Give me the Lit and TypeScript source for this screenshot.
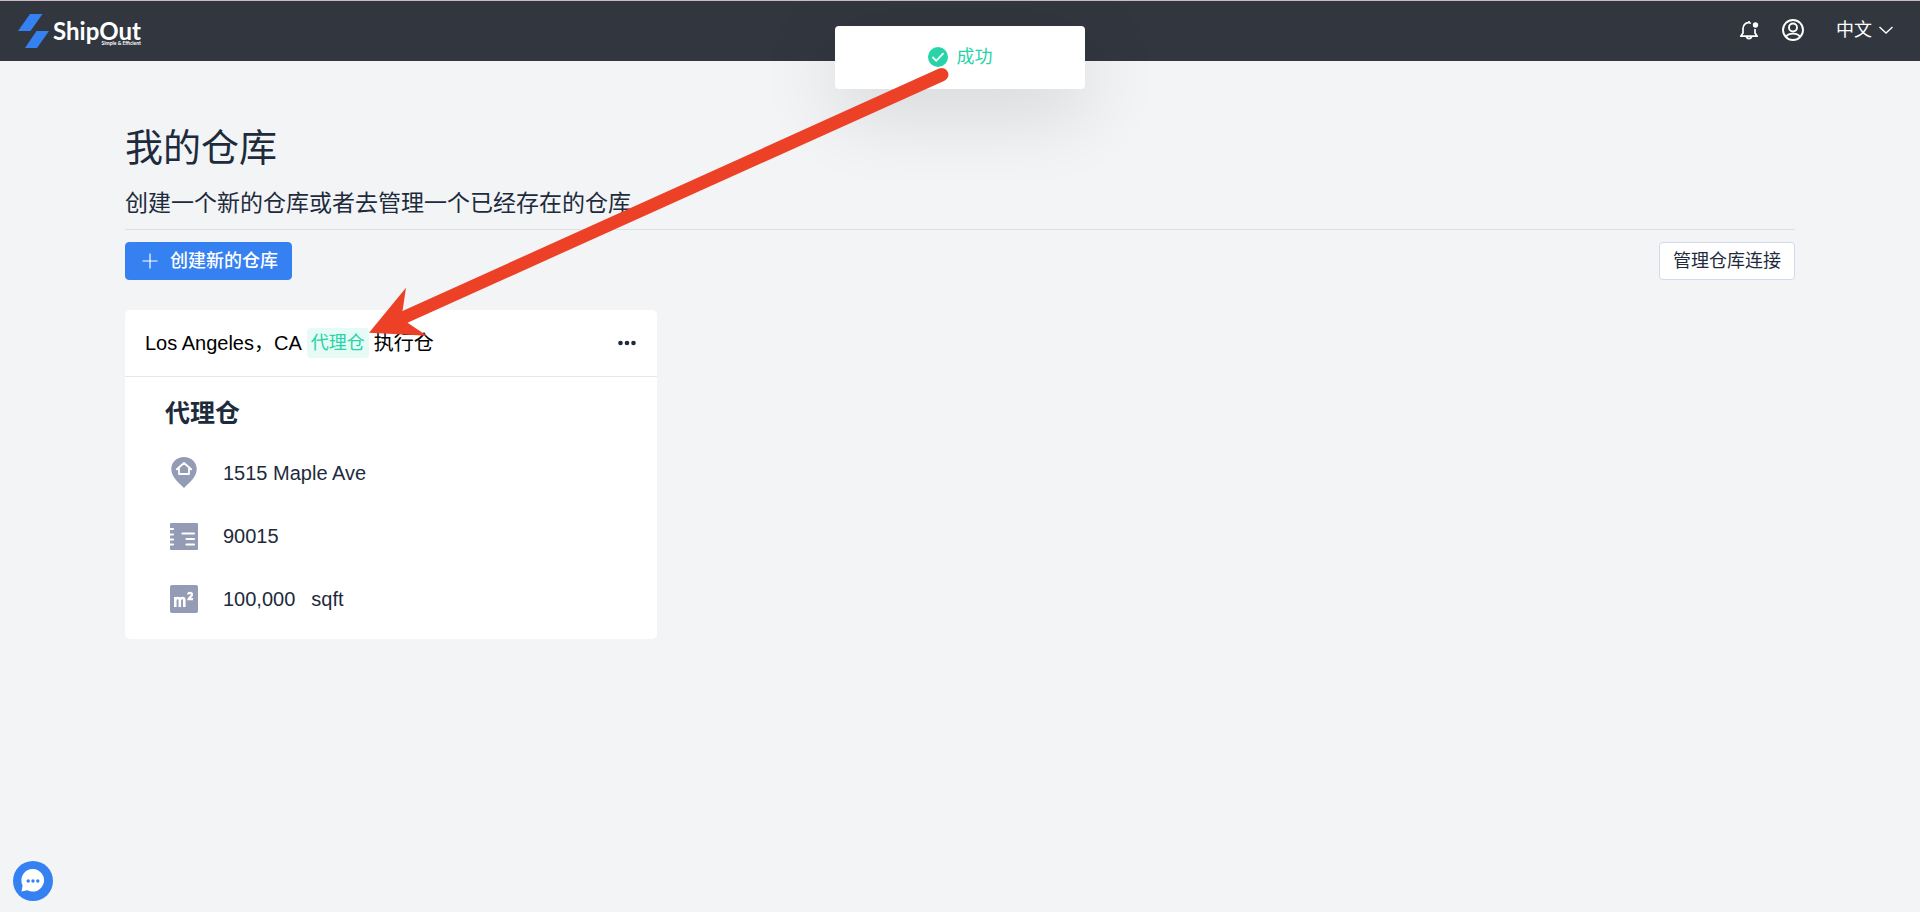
import { LitElement, html, css, svg } from "lit";
import { customElement, state } from "lit/decorators.js";

const pinIcon = svg`
  <path d="M16 0C8.800 0 3.300 5.200 3.300 12C3.300 20 11 26 16 31C21 26 28.700 20 28.700 12C28.700 5.200 23.200 0 16 0Z" fill="#949cb5"/>
  <path d="M8.800 12.300L16 6L23.200 12.300M11 11.500V17H21V11.500" fill="none" stroke="#fff" stroke-width="1.800" stroke-linejoin="round" stroke-linecap="round"/>`;
const zipIcon = svg`
  <rect x="2" y="3" width="28" height="27" rx="1" fill="#949cb5"/>
  <path d="M2 9H5M2 14.500H5M2 19.500H5M2 24.500H5M14.500 13.500H26M18.500 19H26M18.500 24.500H26" stroke="#fff" stroke-width="2.200" stroke-linecap="round"/>`;
const areaIcon = svg`
  <rect x="2" y="2" width="28" height="28" rx="2" fill="#949cb5"/>
  <path d="M7.300 24V14M7.300 17C7.800 14.300 11.800 14.300 11.800 17V24M11.800 17C12.300 14.300 16.300 14.300 16.300 17V24" fill="none" stroke="#fff" stroke-width="2.600"/>
  <path d="M20 11.500C20.500 9.300 24 9.300 24 11.700C24 13.500 21 14.500 20.500 16.200H25" fill="none" stroke="#fff" stroke-width="2.200"/>`;

@customElement("app-root")
export class AppRoot extends LitElement {
  static styles = css`
    :host {
      display: block;
      box-sizing: border-box;
      position: relative;
      min-height: 100vh;
      overflow: hidden;
      background: #f2f4f6;
      color: #1d2b3c;
      font: 18px/24px "Liberation Sans", "Noto Sans CJK SC", sans-serif;
    }
    * { box-sizing: border-box; }
    svg { display: block; flex: none; }
    button { font: inherit; color: inherit; cursor: pointer; margin: 0; }
    h1, h2, p, ul { margin: 0; padding: 0; }

    .topbar {
      display: flex;
      align-items: center;
      justify-content: space-between;
      height: 61px;
      padding: 0 26px 0 18px;
      border-top: 1px solid #cdb9bf;
      background: #32373f;
      color: #fff;
    }
    .brand {
      display: flex;
      align-items: center;
      gap: 4px;
      color: #fff;
      text-decoration: none;
    }
    .words { display: flex; flex-direction: column; padding-top: 2px; }
    .name { font: 700 24px/24px Lato, sans-serif; }
    .tag { font: 700 5px/6px Lato, sans-serif; text-align: right; margin-top: -3px; }
    .tools { display: flex; align-items: center; padding-bottom: 2px; }
    .tool {
      display: flex;
      align-items: center;
      padding: 0;
      border: 0;
      background: none;
    }
    .tool + .tool { margin-left: 21px; }
    .tool.lang { gap: 6px; margin-left: 31px; }

    .page { padding: 59px 125px; }
    h1 { font-size: 38px; line-height: 56px; font-weight: 400; }
    .lead {
      margin-top: 10px;
      padding-bottom: 9px;
      border-bottom: 1px solid #dcdfe4;
      font-size: 23px;
      line-height: 34px;
    }
    .actions { display: flex; justify-content: space-between; margin-top: 12px; }
    .btn {
      display: flex;
      align-items: center;
      height: 38px;
      padding: 0 13px;
      border: 1px solid #d3d9ea;
      border-radius: 4px;
      background: #fff;
    }
    .btn.primary {
      gap: 11px;
      border-color: #3681f2;
      background: #3681f2;
      color: #fff;
      font-weight: 500;
    }
    .grid {
      display: grid;
      grid-template-columns: repeat(3, 1fr);
      gap: 37px;
      margin-top: 30px;
    }
    .card { border-radius: 5px; background: #fff; }
    .cardhead {
      display: flex;
      align-items: center;
      justify-content: space-between;
      height: 67px;
      padding: 0 20px;
      border-bottom: 1px solid #e6e8f0;
      color: #000;
      font-size: 20px;
    }
    .place { display: flex; align-items: center; gap: 5px; }
    .badge {
      padding: 0 4px;
      border-radius: 4px;
      background: #e6faf6;
      color: #27d3a7;
      font-size: 18px;
      line-height: 30px;
    }
    .cardbody { padding: 18px 40px 9px; }
    h2 { font-size: 25px; line-height: 36px; font-weight: 700; }
    .facts { list-style: none; margin-top: 10px; }
    .fact {
      display: flex;
      align-items: center;
      gap: 23px;
      height: 63px;
      padding-left: 3px;
      font-size: 20px;
    }
    .unit { margin-left: 16px; }

    .toast {
      position: absolute;
      top: 26px;
      left: 50%;
      transform: translateX(-50%);
      display: flex;
      align-items: center;
      justify-content: center;
      gap: 9px;
      width: 250px;
      height: 63px;
      padding-bottom: 2px;
      border-radius: 4px;
      background: #fff;
      color: #27d3a7;
      box-shadow: 0 20px 80px rgba(0, 0, 0, 0.14);
    }
    .arrow { position: absolute; top: 0; left: 0; pointer-events: none; }
    .chat {
      position: fixed;
      left: 13px;
      bottom: 11px;
      padding: 0;
      border: 0;
      border-radius: 50%;
      background: none;
    }
  `;

  @state() private facts = [
    { icon: pinIcon, value: "1515 Maple Ave", unit: "" },
    { icon: zipIcon, value: "90015", unit: "" },
    { icon: areaIcon, value: "100,000", unit: "sqft" },
  ];

  render() {
    return html`
      <header class="topbar">
        <a class="brand" href="#">
          <svg width="31" height="36" viewBox="0 0 31 36" fill="#3681f2">
            <path d="M12 1H24.500L12.500 18H0ZM18.500 18H31L19 35H7Z" />
          </svg>
          <span class="words">
            <span class="name">ShipOut</span>
            <span class="tag">Simple &amp; Efficient</span>
          </span>
        </a>
        <nav class="tools">
          <button class="tool" aria-label="通知">
            <svg width="22" height="22" viewBox="0 0 22 22" fill="none" stroke="#fff" stroke-width="1.700" stroke-linejoin="round">
              <path d="M13 4.200C8.500 2.500 5 5.500 5 9.500V14L2.800 17.200H19.200L17 14V10M8.500 17.500C9 20.200 13 20.200 13.500 17.500M11 3.500V2" />
              <circle cx="17.500" cy="6" r="2.700" fill="#fff" stroke="none" />
            </svg>
          </button>
          <button class="tool" aria-label="账户">
            <svg width="24" height="24" viewBox="0 0 24 24" fill="none" stroke="#fff" stroke-width="1.900">
              <circle cx="12" cy="12" r="10" />
              <circle cx="12" cy="9.500" r="4" />
              <path d="M5 19C7 14.500 17 14.500 19 19" />
            </svg>
          </button>
          <button class="tool lang">
            中文
            <svg width="16" height="16" viewBox="0 0 16 16" fill="none" stroke="#fff" stroke-width="1.400">
              <path d="M1.500 5L8 11L14.500 5" />
            </svg>
          </button>
        </nav>
      </header>

      <main class="page">
        <h1>我的仓库</h1>
        <p class="lead">创建一个新的仓库或者去管理一个已经存在的仓库</p>
        <div class="actions">
          <button class="btn primary">
            <svg width="20" height="20" viewBox="0 0 20 20" stroke="#fff" stroke-width="1.200">
              <path d="M11 2.500V17.500M3.500 10H18.500" />
            </svg>
            创建新的仓库
          </button>
          <button class="btn">管理仓库连接</button>
        </div>
        <section class="grid">
          <article class="card">
            <header class="cardhead">
              <div class="place">
                <span>Los Angeles，CA</span>
                <span class="badge">代理仓</span>
                <span>执行仓</span>
              </div>
              <button class="tool" aria-label="更多">
                <svg width="20" height="20" viewBox="0 0 20 20" fill="#1d2b3c">
                  <circle cx="3.500" cy="10" r="2.300" />
                  <circle cx="10" cy="10" r="2.300" />
                  <circle cx="16.500" cy="10" r="2.300" />
                </svg>
              </button>
            </header>
            <div class="cardbody">
              <h2>代理仓</h2>
              <ul class="facts">
                ${this.facts.map(
                  (f) => html`<li class="fact">
                    <svg width="32" height="32" viewBox="0 0 32 32">${f.icon}</svg>
                    <span>${f.value}${f.unit ? html`<span class="unit">${f.unit}</span>` : ""}</span>
                  </li>`
                )}
              </ul>
            </div>
          </article>
        </section>
      </main>

      <div class="toast" role="status">
        <svg width="20" height="20" viewBox="0 0 20 20">
          <circle cx="10" cy="10" r="10" fill="#27d3a7" />
          <path d="M4.500 10L8.200 13.800L15.500 6.200" fill="none" stroke="#fff" stroke-width="1.800" />
        </svg>
        成功
      </div>

      <svg class="arrow" width="960" height="350" viewBox="0 0 960 350">
        <path fill="#ec4127" d="M369 332.700L406 287.700L402.500 311L939 68.600A6.500 6.500 0 0 1 944.500 80.700L407.500 322.700L427 335.700Z" />
      </svg>

      <button class="chat" aria-label="聊天">
        <svg width="40" height="40" viewBox="0 0 40 40">
          <circle cx="20" cy="20" r="20" fill="#3681f2" />
          <path d="M20 8A11.300 11.300 0 1 1 14.500 29.300L8.500 30.500L9.600 24.500A11.300 11.300 0 0 1 20 8Z" fill="#fff" />
          <circle cx="15.200" cy="20" r="1.700" fill="#3681f2" />
          <circle cx="20" cy="20" r="1.700" fill="#3681f2" />
          <circle cx="24.800" cy="20" r="1.700" fill="#3681f2" />
        </svg>
      </button>
    `;
  }
}
